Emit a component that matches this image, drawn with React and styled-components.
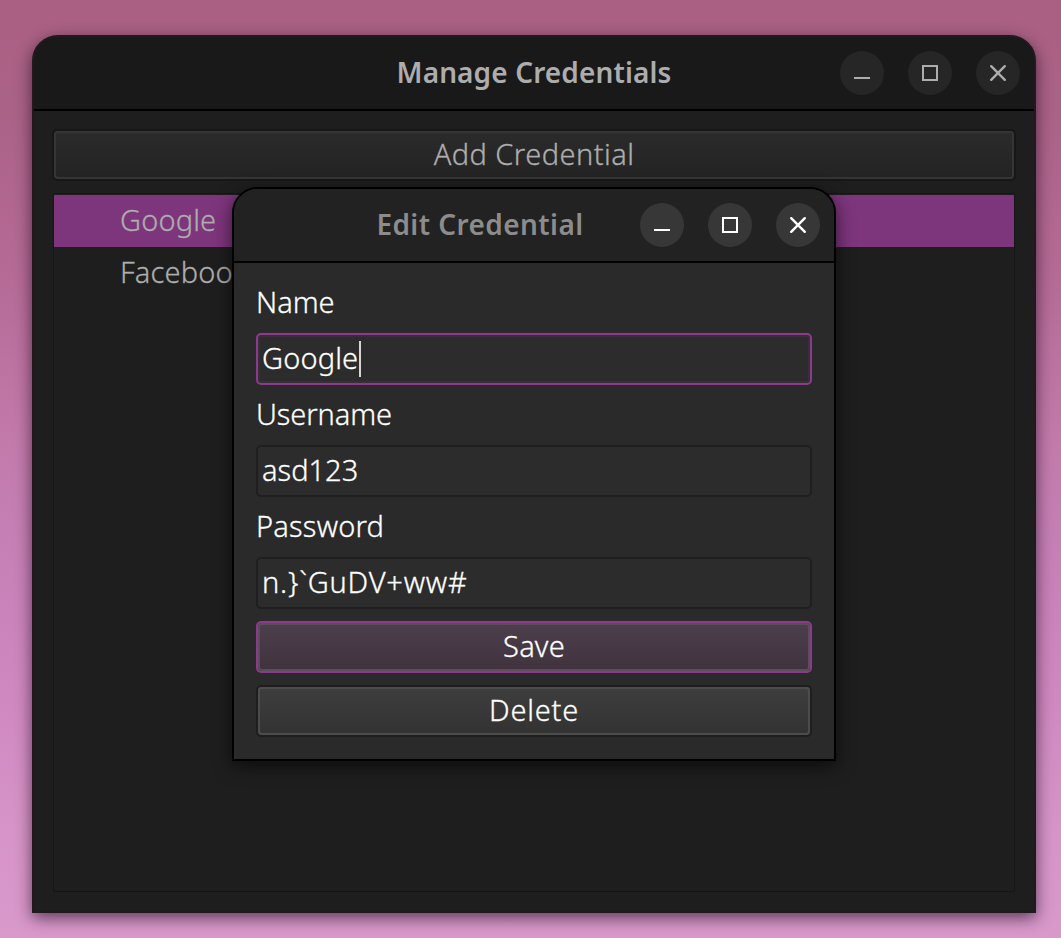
import React from "react";
import styled, { createGlobalStyle } from "styled-components";

const GlobalStyle = createGlobalStyle`
  * { box-sizing: border-box; }
  body { margin: 0; overflow: hidden; font-family: "Noto Sans", "Open Sans", sans-serif; }
`;

const Desktop = styled.main`
  width: 1061px;
  height: 938px;
  padding: 35px 25px 25px 32px;
  background: linear-gradient(180deg, #a96082 0px, #ab6287 110px, #b46a95 270px, #c37bac 450px, #c680b6 550px, #d08ac1 710px, #d694c8 830px, #d999cb 938px);
`;

const Window = styled.section`
  position: relative;
  width: 1004px;
  height: 878px;
  border: 2px solid #201a1f;
  border-radius: 26px 26px 0 0;
  background: #1e1e1e;
  color: #adadad;
  box-shadow: 0 5px 16px rgba(20, 0, 20, 0.62);
`;

const Dialog = styled(Window)`
  position: absolute;
  left: 198px;
  top: 150px;
  width: 604px;
  height: 574px;
  border-color: #000;
  background: #2a2a2a;
  color: #fff;
  box-shadow: 0 5px 18px rgba(0, 0, 0, 0.6);
`;

const TitleBar = styled.header`
  display: flex;
  align-items: center;
  gap: 24px;
  height: 74px;
  padding: 0 14px;
  border-bottom: 2px solid #000;
  border-radius: 24px 24px 0 0;
  background: ${(p) => (p.$front ? "#222222" : "#191919")};
`;

const Title = styled.h1`
  flex: 1;
  margin: 0 -24px 0 0;
  padding: 0 0 3px ${(p) => p.$indent}px;
  text-align: center;
  white-space: nowrap;
  font-size: 28px;
  font-weight: 600;
  line-height: 36px;
  color: ${(p) => (p.$front ? "#8c8c8c" : "#adadad")};
  letter-spacing: ${(p) => p.$track || 0}px;
`;

const ControlButton = styled.button`
  display: block;
  width: 44px;
  height: 44px;
  padding: 0;
  border: 0;
  border-radius: 50%;
  background: ${(p) => (p.$front ? "#373737" : "#262626")};
  color: ${(p) => (p.$front ? "#fff" : "#adadad")};

  svg { display: block; fill: none; stroke: currentColor; stroke-width: 2; }
`;

const Text = styled.span`
  font-size: 29px;
  font-weight: 300;
  line-height: 36px;
  white-space: pre;
  letter-spacing: ${(p) => p.$track || 0}px;
  -webkit-text-stroke: 0.3px currentColor;
`;

const LabelText = styled(Text)`
  height: 36px;
  line-height: 34px;
`;

const MainBody = styled.div`
  display: flex;
  flex-direction: column;
  gap: 12px;
  padding: 18px;
`;

const buttonLook = {
  dim: { edge: "#171717", rim: "#353535", fill: "#2b2b2b, #232323" },
  plain: { edge: "#1e1e1e", rim: "#4c4c4c", fill: "#3e3e3e, #323232" },
  accent: { edge: "#8d398e", rim: "#5b4d59", fill: "#4c3e4b, #40333e" },
};

const PushButton = styled.button`
  position: relative;
  display: flex;
  align-items: center;
  justify-content: center;
  width: 100%;
  height: 52px;
  padding: 0 0 2px;
  border: 2px solid ${(p) => buttonLook[p.$look].edge};
  border-radius: 5px;
  background: linear-gradient(${(p) => buttonLook[p.$look].fill});
  color: inherit;
  font-family: inherit;

  &::before {
    content: "";
    position: absolute;
    inset: 0;
    border: 2px solid ${(p) => buttonLook[p.$look].rim};
    border-radius: 4px;
  }
`;

const List = styled.ul`
  height: 699px;
  margin: 0 1px;
  padding: 1px 0;
  border: 1px solid #161616;
  border-radius: 2px;
  list-style: none;
`;

const ListRow = styled.li`
  display: flex;
  align-items: center;
  height: 52px;
  padding: 0 0 2px 66px;
  background: ${(p) => (p.$selected ? "#7d357c" : "transparent")};
`;

const Form = styled.form`
  display: flex;
  flex-direction: column;
  gap: 12px;
  padding: 22px;
`;

const Field = styled.label`
  display: flex;
  flex-direction: column;
  gap: 12px;
`;

const InputBox = styled.div`
  display: flex;
  align-items: center;
  height: 52px;
  padding: 0 4px 2px;
  border: 2px solid ${(p) => (p.$focused ? "#8d398e" : "#1f1f1f")};
  border-radius: 5px;
  background: #2c2c2c;
  box-shadow: ${(p) => (p.$focused ? "inset 0 0 0 2px #382e38" : "none")};
`;

const Caret = styled.i`
  width: 2px;
  height: 36px;
  margin: 2px 0 0 1px;
  background: #d5d5d5;
`;

function Controls({ front }) {
  return (
    <>
      <ControlButton $front={front} aria-label="Minimize">
        <svg width="44" height="44"><path d="M14 27h16" /></svg>
      </ControlButton>
      <ControlButton $front={front} aria-label="Maximize">
        <svg width="44" height="44"><path d="M15 15h14v14H15z" /></svg>
      </ControlButton>
      <ControlButton $front={front} aria-label="Close">
        <svg width="44" height="44"><path strokeLinecap="round" style={{ strokeWidth: 2.4 }} d="M15.2 15.2l13.6 13.6M28.8 15.2L15.2 28.8" /></svg>
      </ControlButton>
    </>
  );
}

const fields = [
  { label: "Name", value: "Google", focused: true, valueTrack: 0.15 },
  { label: "Username", value: "asd123", labelTrack: -0.1 },
  { label: "Password", value: "n.}`GuDV+ww#", labelTrack: 0.2, valueTrack: 0.8 },
];

export default function App() {
  return (
    <Desktop>
      <GlobalStyle />
      <Window>
        <TitleBar>
          <Title $indent={180} $track={0.12}>Manage Credentials</Title>
          <Controls />
        </TitleBar>
        <MainBody>
          <PushButton $look="dim"><Text $track={0.45}>Add Credential</Text></PushButton>
          <List>
            <ListRow $selected><Text $track={0.15}>Google</Text></ListRow>
            <ListRow><Text $track={0.15}>Facebook</Text></ListRow>
          </List>
        </MainBody>
        <Dialog role="dialog">
          <TitleBar $front>
            <Title $front $indent={72} $track={0.42}>Edit Credential</Title>
            <Controls front />
          </TitleBar>
          <Form>
            {fields.map((f) => (
              <Field key={f.label}>
                <LabelText $track={f.labelTrack}>{f.label}</LabelText>
                <InputBox $focused={f.focused}>
                  <Text $track={f.valueTrack}>{f.value}</Text>
                  {f.focused && <Caret />}
                </InputBox>
              </Field>
            ))}
            <PushButton type="button" $look="accent"><Text $track={0.2}>Save</Text></PushButton>
            <PushButton type="button" $look="plain"><Text $track={0.8}>Delete</Text></PushButton>
          </Form>
        </Dialog>
      </Window>
    </Desktop>
  );
}
